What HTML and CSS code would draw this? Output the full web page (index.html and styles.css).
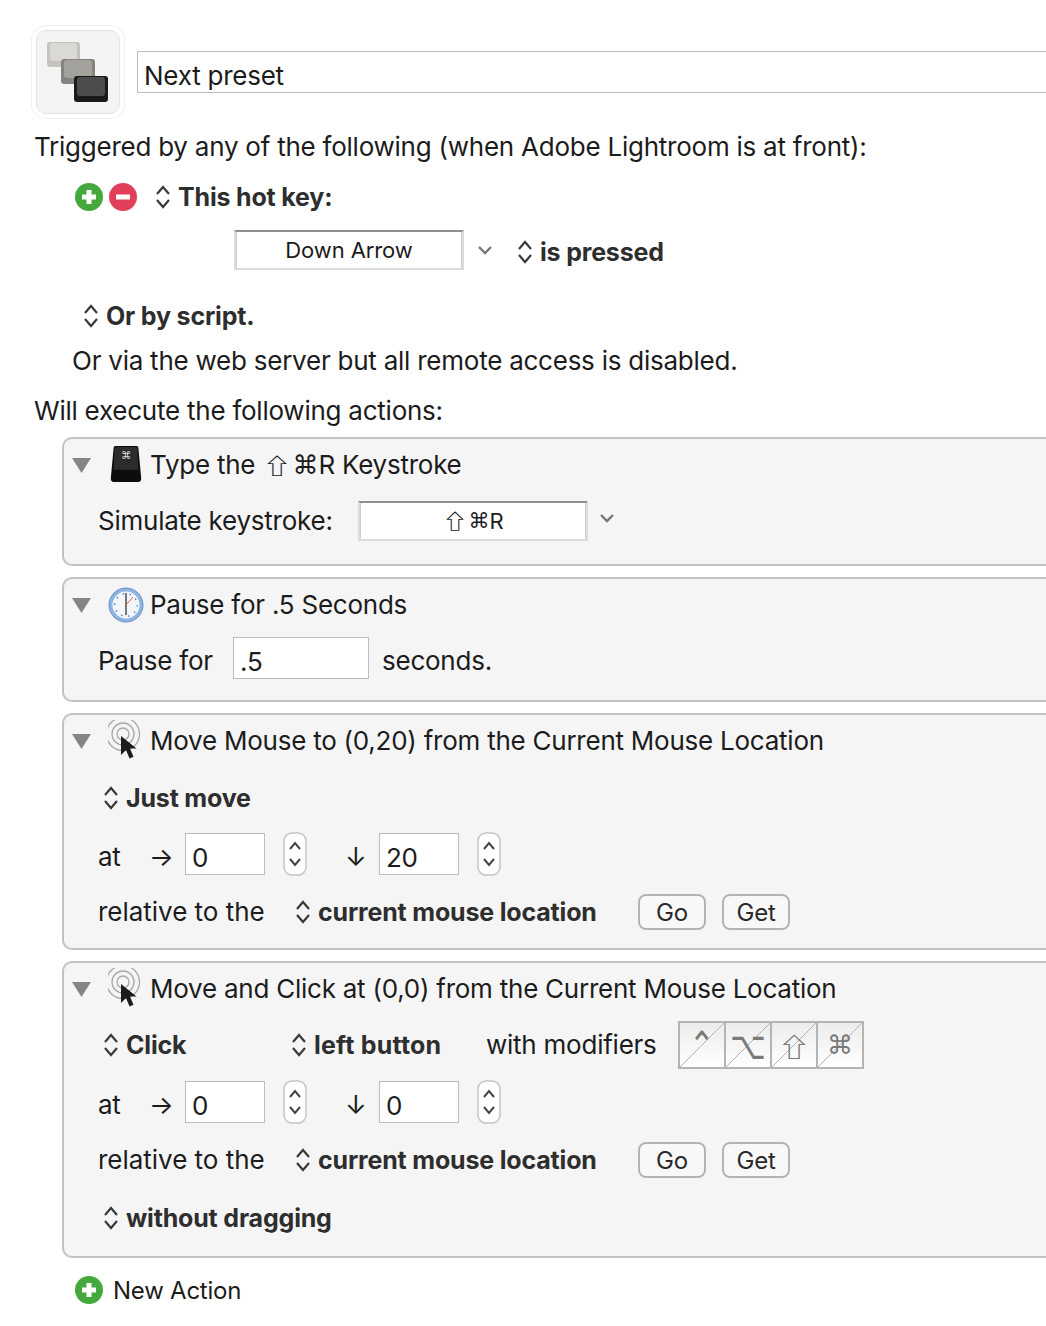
FILE: index.html
```html
<!DOCTYPE html>
<html lang="en">
<head>
    <meta charset="UTF-8">
    <title>Next preset</title>
    <link rel="stylesheet" href="styles.css">
</head>
<body>
    <svg class="defs" width="0" height="0">
        <symbol id="updown" viewBox="0 0 16 28">
            <path d="M2 11 8 4l6 7M2 17l6 7 6-7" fill="none" stroke="#3a3a3a" stroke-width="2.2"/>
        </symbol>
        <symbol id="stepper" viewBox="0 0 24 44">
            <rect x="1" y="1" width="22" height="42" rx="8" fill="#fff" stroke="#c4c4c4" stroke-width="1.5"/>
            <path d="M7 17l5-6 5 6M7 27l5 6 5-6" fill="none" stroke="#444" stroke-width="2"/>
        </symbol>
        <symbol id="chevron" viewBox="0 0 16 10">
            <path d="M2 2l6 6 6-6" fill="none" stroke="#777" stroke-width="2.4"/>
        </symbol>
        <symbol id="triangle" viewBox="0 0 19 16">
            <path d="M0 1h19L9.500 16z" fill="#858585"/>
        </symbol>
        <symbol id="plus" viewBox="0 0 28 28">
            <circle cx="14" cy="14" r="14" fill="#45a83c"/>
            <path d="M14 7v14M7 14h14" stroke="#fff" stroke-width="5"/>
        </symbol>
        <symbol id="minus" viewBox="0 0 28 28">
            <circle cx="14" cy="14" r="14" fill="#e2405a"/>
            <path d="M7 14h14" stroke="#fff" stroke-width="5"/>
        </symbol>
        <symbol id="target" viewBox="0 0 36 40">
            <g fill="none" stroke="#a8a8a8" stroke-width="1.300">
                <circle cx="15" cy="14" r="16.500"/>
                <circle cx="15" cy="14" r="11"/>
                <circle cx="15" cy="14" r="6"/>
            </g>
            <path d="M13 16V35l5-5 3.500 8.500 4-1.700L22 28.500h6.500z" fill="#1c1c1c"/>
        </symbol>
    </svg>

    <div class="macro-head">
        <div class="macro-icon">
            <svg width="66" height="64" viewBox="0 0 66 64">
                <rect x="1" y="0" width="33" height="25" rx="3" fill="#c5c3bd"/>
                <rect x="4" y="1" width="27" height="18" rx="3" fill="#dad9d5"/>
                <rect x="15" y="17" width="34" height="25" rx="3" fill="#86837e"/>
                <rect x="18" y="18" width="28" height="18" rx="3" fill="#a3a19c"/>
                <rect x="28" y="34" width="34" height="26" rx="3" fill="#1a1a1a"/>
                <rect x="31" y="35" width="28" height="19" rx="3" fill="#4c4c4c"/>
            </svg>
        </div>
        <div class="field name-field">Next preset</div>
    </div>

    <div class="line line-triggered">Triggered by any of the following (when Adobe Lightroom is at front):</div>

    <div class="line line-hotkey">
        <svg class="round" viewBox="0 0 28 28"><use href="#plus"/></svg>
        <svg class="round minus" viewBox="0 0 28 28"><use href="#minus"/></svg>
        <svg class="updown hotkey-updown"><use href="#updown"/></svg>
        <b>This hot key:</b>
    </div>

    <div class="line line-key">
        <div class="keybox">Down Arrow</div>
        <svg class="chevron key-chevron"><use href="#chevron"/></svg>
        <svg class="updown pressed-updown"><use href="#updown"/></svg>
        <b>is pressed</b>
    </div>

    <div class="line line-script">
        <svg class="updown"><use href="#updown"/></svg>
        <b>Or by script.</b>
    </div>

    <div class="line line-web">Or via the web server but all remote access is disabled.</div>
    <div class="line line-execute">Will execute the following actions:</div>

    <div class="actions">
        <section class="card card-type">
            <div class="row title">
                <svg class="triangle"><use href="#triangle"/></svg>
                <div class="action-icon">
                    <svg class="keycap" width="36" height="38" viewBox="0 0 36 40">
                        <path d="M7 1h22q2 0 2 2l3 32q0 4-3 4H5q-3 0-3-4L5 3q0-2 2-2z" fill="#0d0d0d"/>
                        <path d="M8 2h20q2 0 2 2l1 22H5L6 4q0-2 2-2z" fill="#2c2c2c"/>
                        <text x="18" y="15" class="key-glyph" text-anchor="middle">⌘</text>
                    </svg>
                </div>
                <span>Type the <span class="glyph shift">⇧</span><span class="glyph">⌘</span>R Keystroke</span>
            </div>
            <div class="row mt-16">
                <span class="keystroke-label">Simulate keystroke:</span>
                <div class="keybox"><span class="glyph shift">⇧</span><span class="glyph">⌘</span>R</div>
                <svg class="chevron stroke-chevron"><use href="#chevron"/></svg>
            </div>
        </section>

        <section class="card card-pause">
            <div class="row title">
                <svg class="triangle"><use href="#triangle"/></svg>
                <div class="action-icon">
                    <svg width="36" height="36" viewBox="0 0 36 36">
                        <circle cx="18" cy="18" r="17" fill="#8db4e2" stroke="#6d8fc0"/>
                        <circle cx="18" cy="18" r="13.500" fill="#f4f6fa"/>
                        <g stroke="#5a86c4" stroke-width="1.500" stroke-dasharray="1.500 5.570" fill="none">
                            <circle cx="18" cy="18" r="11.300"/>
                        </g>
                        <path d="M18 18V6M18 18v10" stroke="#333" stroke-width="1.300"/>
                        <path d="M18 18l7-8" stroke="#e0604a" stroke-width="1"/>
                    </svg>
                </div>
                <span>Pause for .5 Seconds</span>
            </div>
            <div class="row mt-16">
                <span class="pause-label">Pause for</span>
                <div class="field pause-field">.5</div>
                <span class="seconds">seconds.</span>
            </div>
        </section>

        <section class="card card-move">
            <div class="row title">
                <svg class="triangle"><use href="#triangle"/></svg>
                <div class="action-icon"><svg class="target"><use href="#target"/></svg></div>
                <span>Move Mouse to (0,20) from the Current Mouse Location</span>
            </div>
            <div class="row mt-17 popup">
                <svg class="updown"><use href="#updown"/></svg>
                <b>Just move</b>
            </div>
            <div class="row mt-19">
                <span class="at">at</span>
                <span class="arrow right">→</span>
                <div class="field coord">0</div>
                <svg class="stepper"><use href="#stepper"/></svg>
                <span class="arrow down">↓</span>
                <div class="field coord">20</div>
                <svg class="stepper"><use href="#stepper"/></svg>
            </div>
            <div class="row mt-15">
                <span class="relative">relative to the</span>
                <svg class="updown"><use href="#updown"/></svg>
                <b class="location">current mouse location</b>
                <div class="btn">Go</div>
                <div class="btn get">Get</div>
            </div>
        </section>

        <section class="card card-click">
            <div class="row title">
                <svg class="triangle"><use href="#triangle"/></svg>
                <div class="action-icon"><svg class="target"><use href="#target"/></svg></div>
                <span>Move and Click at (0,0) from the Current Mouse Location</span>
            </div>
            <div class="row mt-16 popup">
                <svg class="updown"><use href="#updown"/></svg>
                <b class="click-label">Click</b>
                <svg class="updown"><use href="#updown"/></svg>
                <b class="button-label">left button</b>
                <span class="with-mods">with modifiers</span>
                <div class="mods">
                    <div class="mod"><span class="mod-tall">⌃</span></div>
                    <div class="mod"><span class="mod-tall">⌥</span></div>
                    <div class="mod"><span class="mod-shift">⇧</span></div>
                    <div class="mod">⌘</div>
                </div>
            </div>
            <div class="row mt-20">
                <span class="at">at</span>
                <span class="arrow right">→</span>
                <div class="field coord">0</div>
                <svg class="stepper"><use href="#stepper"/></svg>
                <span class="arrow down">↓</span>
                <div class="field coord">0</div>
                <svg class="stepper"><use href="#stepper"/></svg>
            </div>
            <div class="row mt-15">
                <span class="relative">relative to the</span>
                <svg class="updown"><use href="#updown"/></svg>
                <b class="location">current mouse location</b>
                <div class="btn">Go</div>
                <div class="btn get">Get</div>
            </div>
            <div class="row mt-18 popup">
                <svg class="updown"><use href="#updown"/></svg>
                <b>without dragging</b>
            </div>
        </section>
    </div>

    <div class="new-action">
        <svg class="round" viewBox="0 0 28 28"><use href="#plus"/></svg>
        <span>New Action</span>
    </div>
</body>
</html>
```

FILE: styles.css
```css
/* General Styles */
html, body {
    margin: 0;
    padding: 0;
    overflow: hidden;
}

body {
    background: #fff;
    color: #1c1c1c;
    font-family: 'Inter', 'DejaVu Sans', sans-serif;
    font-size: 26px;
    height: 1326px;
    letter-spacing: -0.24px;
}

b {
    color: #2e2e2e;
    font-weight: 700;
    font-size: 25px;
    letter-spacing: -0.18px;
}

.defs {
    position: absolute;
}

.glyph {
    font-family: 'DejaVu Sans', sans-serif;
    font-size: 26px;
    line-height: 1;
    letter-spacing: 0;
}

.glyph.shift {
    display: inline-block;
    font-family: 'Noto Sans CJK JP', 'DejaVu Sans', sans-serif;
    font-weight: 500;
    font-size: 22px;
    margin: 0 4px;
    transform: scaleX(1.3);
}

/* Macro header */
.macro-head {
    display: flex;
    margin: 30px -60px 0 36px;
}

.macro-icon {
    box-sizing: border-box;
    width: 84px;
    height: 84px;
    flex: none;
    border: 1px solid #e4e4e4;
    border-radius: 10px;
    padding: 11px 0 0 9px;
    background: #f4f4f4;
    box-shadow: 0 0 0 4px #fff, 0 0 0 5px #f0f0f0;
}

.field {
    box-sizing: border-box;
    background: #fff;
    border: 1px solid #bdbdbd;
    display: flex;
    align-items: center;
    padding: 6px 0 0 6px;
}

.name-field {
    flex: 1;
    height: 42px;
    margin: 21px 0 0 17px;
}

/* Trigger lines */
.line {
    display: flex;
    align-items: center;
    height: 34px;
    white-space: nowrap;
}

.line-triggered {
    margin: 15px 0 0 34px;
}

.line-hotkey {
    margin: 17px 0 0 75px;
}

.line-key {
    margin: 16px 0 0 234px;
    height: 40px;
}

.line-key b,
.pressed-updown {
    margin-top: 3px;
}

.line-script {
    margin: 29px 0 0 83px;
}

.line-web {
    margin: 10px 0 0 72px;
}

.line-execute {
    margin: 16px 0 0 34px;
}

.round {
    width: 28px;
    height: 28px;
    flex: none;
}

.minus {
    margin-left: 6px;
}

.hotkey-updown {
    margin-left: 18px;
}

.updown {
    width: 16px;
    height: 28px;
    flex: none;
    margin-right: 7px;
}

.chevron {
    width: 16px;
    height: 10px;
    flex: none;
}

.key-chevron {
    margin-left: 13px;
}

.pressed-updown {
    margin-left: 24px;
}

.stroke-chevron {
    margin: -6px 0 0 11px;
}

.keybox {
    box-sizing: border-box;
    width: 230px;
    height: 40px;
    flex: none;
    background: #fff;
    border: 2px solid #dcdcdc;
    border-top-color: #8f8f8f;
    box-shadow: inset 1px 0 #cfcfcf, inset -1px 0 #cfcfcf;
    display: flex;
    align-items: center;
    justify-content: center;
    font-size: 22px;
    letter-spacing: -0.1px;
}

.keybox .glyph {
    font-size: 21px;
}

.keybox .glyph.shift {
    font-size: 20px;
    margin: 0 3px;
}

/* Action cards */
.actions {
    margin: 10px -60px 0 62px;
}

.card {
    box-sizing: border-box;
    background: #f5f5f5;
    border: 2px solid #c2c2c2;
    border-radius: 10px;
    padding: 6px 0 0 34px;
    margin-bottom: 11px;
}

.card-type {
    height: 129px;
}

.card-pause {
    height: 125px;
}

.card-move {
    height: 237px;
}

.card-click {
    height: 297px;
}

.row {
    display: flex;
    align-items: center;
    height: 40px;
    white-space: nowrap;
}

.row > span {
    margin-bottom: 2px;
}

.title {
    margin-left: -26px;
}

.triangle {
    width: 19px;
    height: 16px;
    flex: none;
}

.action-icon {
    width: 36px;
    height: 40px;
    margin: 0 6px 0 17px;
    display: flex;
    align-items: center;
    justify-content: center;
    flex: none;
}

.target {
    width: 36px;
    height: 40px;
    margin-top: -2px;
}

.keycap {
    margin-top: -3px;
}

.key-glyph {
    font-family: 'DejaVu Sans', sans-serif;
    font-size: 11px;
    fill: #ddd;
}

.mt-15 { margin-top: 15px; }
.mt-16 { margin-top: 16px; }
.mt-17 { margin-top: 17px; }
.mt-18 { margin-top: 18px; }
.mt-19 { margin-top: 19px; }
.mt-20 { margin-top: 20px; }

.popup {
    padding-left: 5px;
}

.keystroke-label {
    width: 260px;
    flex: none;
}

.pause-label {
    width: 135px;
    flex: none;
}

.pause-field {
    width: 136px;
    height: 42px;
    flex: none;
    margin-bottom: 6px;
}

.seconds {
    margin-left: 13px;
}

.at {
    width: 53px;
    flex: none;
}

.arrow {
    font-size: 26px;
    flex: none;
}

.arrow.right {
    width: 34px;
    margin-left: -2px;
    padding-right: 2px;
}

.arrow.down {
    width: 34px;
    margin-left: 38px;
}

.coord {
    width: 80px;
    height: 42px;
    flex: none;
    margin-bottom: 6px;
}

.stepper {
    width: 24px;
    height: 44px;
    margin: 0 0 6px 18px;
    flex: none;
}

.relative {
    width: 197px;
    flex: none;
    letter-spacing: -0.02px;
}

.location {
    width: 320px;
    flex: none;
}

.btn {
    box-sizing: border-box;
    width: 68px;
    height: 36px;
    flex: none;
    border: 2px solid #b4b4b4;
    border-radius: 8px;
    background: #f8f8f8;
    display: flex;
    align-items: center;
    justify-content: center;
    font-size: 24px;
    color: #2a2a2a;
}

.get {
    margin-left: 16px;
}

.click-label {
    width: 165px;
    flex: none;
}

.button-label {
    width: 172px;
    flex: none;
    letter-spacing: 0.2px;
}

.with-mods {
    width: 192px;
    flex: none;
}

.mods {
    display: flex;
    border: 2px solid #b4b4b4;
    height: 48px;
    box-sizing: border-box;
}

.mod {
    box-sizing: border-box;
    width: 46px;
    display: flex;
    align-items: center;
    justify-content: center;
    border-left: 2px solid #b4b4b4;
    font-family: 'DejaVu Sans', sans-serif;
    font-size: 26px;
    color: #7a7a7a;
    background:
        linear-gradient(to bottom right, transparent 49%, #b4b4b4 49%, #b4b4b4 51%, transparent 51%),
        linear-gradient(#ececec, #fff);
}

.mod:first-child {
    border-left: 0;
    width: 44px;
}

.mod-tall {
    display: inline-block;
    transform: scale(1.2, 1.5);
}

.mod-shift {
    display: inline-block;
    font-family: 'Noto Sans CJK JP', 'DejaVu Sans', sans-serif;
    font-weight: 500;
    transform: scaleX(1.3);
}

/* Footer */
.new-action {
    display: flex;
    align-items: center;
    gap: 10px;
    margin: 15px 0 0 75px;
    height: 34px;
    font-size: 24px;
}
```
